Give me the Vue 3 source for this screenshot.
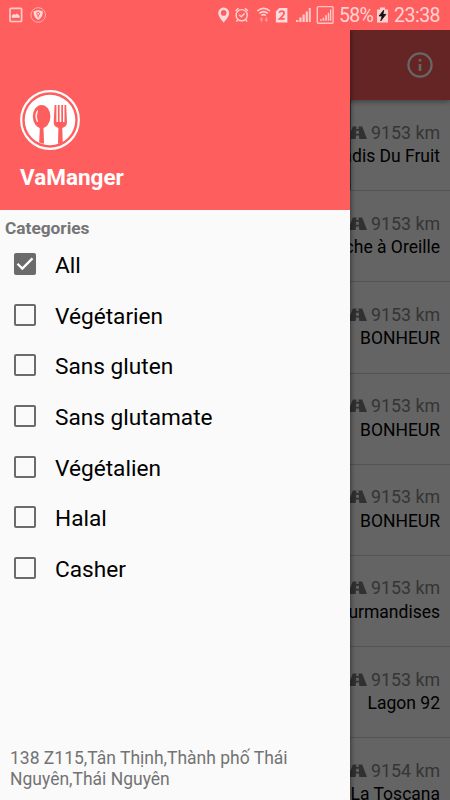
<script setup>
import { ref } from 'vue'

const restaurants = [
  { id: 1, name: 'Paradis Du Fruit', distance: '9153 km', photo: true },
  { id: 2, name: 'Bouche à Oreille', distance: '9153 km' },
  { id: 3, name: 'BONHEUR', distance: '9153 km' },
  { id: 4, name: 'BONHEUR', distance: '9153 km' },
  { id: 5, name: 'BONHEUR', distance: '9153 km' },
  { id: 6, name: 'Gourmandises', distance: '9153 km' },
  { id: 7, name: 'Lagon 92', distance: '9153 km' },
  { id: 8, name: 'La Toscana', distance: '9154 km' }
]

const categories = ref([
  { name: 'All', checked: true },
  { name: 'Végétarien', checked: false },
  { name: 'Sans gluten', checked: false },
  { name: 'Sans glutamate', checked: false },
  { name: 'Végétalien', checked: false },
  { name: 'Halal', checked: false },
  { name: 'Casher', checked: false }
])

const toggle = (category) => {
  category.checked = !category.checked
}
</script>

<template>
  <div class="screen">
    <header class="status-bar">
      <svg class="status-left" width="40" height="30" viewBox="0 0 40 30">
        <rect x="1" y="8.3" width="11.6" height="13.2" rx="1" fill="none" stroke="#ffc9c9" stroke-width="1.7" />
        <path d="M2.8 17.8v-2l2-1.8 1.600.8 1.500-1.400 2.700 2.400v2z" fill="#ffdada" />
        <circle cx="29.200" cy="15" r="7.300" fill="none" stroke="#ffabab" stroke-width="1" />
        <path d="M29.200 10l4.600 1.300c.2 4-1.300 7-4.600 8.800-3.300-1.800-4.800-4.800-4.600-8.800z" fill="#ffd5d5" />
        <circle cx="29.200" cy="13.700" r="1.400" fill="none" stroke="#ff5e5e" />
        <path d="M29.200 15v2.500" stroke="#ff5e5e" />
      </svg>
      <svg class="status-icons" width="120" height="30" viewBox="215 0 120 30">
        <path fill-rule="evenodd" d="M223.700 7.600a5.500 5.300 0 0 0-5.500 5.300c0 3.700 5.500 9.500 5.500 9.500s5.500-5.800 5.500-9.500a5.500 5.300 0 0 0-5.500-5.300zm0 2.500a2.800 2.800 0 1 1 0 5.600 2.800 2.800 0 0 1 0-5.600z" fill="#ffdada" />
        <g fill="none" stroke="#ffd0d0" stroke-width="1.400">
          <circle cx="241.700" cy="15.200" r="5.600" />
          <path d="M235.500 11l3-2.800M248 11l-3-2.800M238 19.500l-1.600 2M245.500 19.500l1.600 2M239.200 14.800l2 2 3.400-3.300" />
          <path d="M257.300 11q6.300-5.300 12.600 0M259.400 13.300q4.200-3.500 8.400 0M261.400 15.500q2.200-1.800 4.400 0" stroke-width="1.600" />
        </g>
        <path d="M259.500 19.500l2-2.500 2 2.500h-1.200v2.200h-1.600v-2.200zM264.400 19.400h1.200v-2.200h1.600v2.200h1.200l-2 2.500z" fill="#ff9999" />
        <path d="M279.200 8h8.200v14.500h-11.500v-11z" fill="#ffdada" />
        <path d="M279.200 12.800q.6-1.600 2.600-1.600 2.300 0 2.300 2 0 1.300-1.700 3l-2.800 2.700h5" fill="none" stroke="#ff5e5e" stroke-width="1.700" />
        <path d="M296 22v-2h2.400v2zM299.300 22v-4.500h2.300v4.500zM302.500 22v-7.500h2.300v7.500zM305.700 22v-10.500h2.200v10.500zM308.800 22v-14h2v14z" fill="#ffcaca" />
        <rect x="317.300" y="6.600" width="15.800" height="16.700" rx="1" fill="none" stroke="#ffc3c3" stroke-width="1.400" />
        <path d="M320 20.800v-1.500h1.700v1.500zM322.600 20.800v-3h1.700v3zM325.200 20.800v-5.500h1.700v5.500zM327.800 20.800v-8h1.500v8zM330 20.800V9.500h1.300v11.300z" fill="#ffcaca" />
      </svg>
      <span class="battery">58%</span>
      <svg class="battery-icon" width="11" height="30" viewBox="0 0 11 30">
        <path d="M0 9.500h3V7.600h5v1.900h3v13H0z" fill="#ffcfcf" />
        <path d="M6.800 10L2 16h3l-1.300 5L9 14.300H6z" fill="#170b0b" stroke="#170b0b" stroke-width=".7" />
      </svg>
      <span class="clock">23:38</span>
    </header>

    <main class="page">
      <div class="toolbar">
        <svg width="26" height="26" viewBox="0 0 26 26" fill="none" stroke="#fff" stroke-width="2.200">
          <circle cx="13" cy="13" r="11.600" />
          <path d="M13 12v7M13 7v2.500" stroke-width="2.600" />
        </svg>
      </div>
      <ul class="restaurants">
        <li v-for="restaurant in restaurants" :key="restaurant.id" class="restaurant">
          <div class="photo" :class="{ tinted: restaurant.photo }"></div>
          <div class="info">
            <div class="distance">
              <svg width="19" height="15" viewBox="0 0 19 15">
                <path fill-rule="evenodd" d="M4.800 1.500h3.700L8.300 4h2.400l-.2-2.500h3.700L19 14h-7.700l-.3-3.500H8L7.700 14H0zM8.200 5.700L8 8.800h3l-.2-3.100z" fill="#7b7b7b" />
              </svg>
              <span>{{ restaurant.distance }}</span>
            </div>
            <div class="name">{{ restaurant.name }}</div>
          </div>
        </li>
      </ul>
    </main>

    <div class="scrim"></div>

    <aside class="drawer">
      <div class="drawer-header">
        <svg class="logo" width="60" height="60" viewBox="0 0 60 60">
          <circle cx="30" cy="30" r="28.800" fill="none" stroke="#fff" stroke-width="2.200" />
          <circle cx="30" cy="30" r="25.300" fill="#fff" />
          <g fill="#ff5e5e">
            <ellipse cx="21.600" cy="26.500" rx="8.800" ry="11.500" />
            <path d="M19.900 36h3.500l.7 17.800q-2.600-.5-4.900-1.500z" />
            <path d="M34.600 15h1.800v17h1.500V15h1.700v17h1.700V15h1.700v17h1.500V15h1.700l.8 17.500q0 4-4.700 5.500l.4 14.200q-2.200 1.100-4.700 1.700l.4-15.900q-4.700-1.500-4.700-5.500z" />
          </g>
          <path d="M17.500 20.500q-3.500 5 0 11.500-2-6 0-11.500z" fill="#fff" stroke="#fff" stroke-width=".7" />
        </svg>
        <h1>VaManger</h1>
      </div>

      <h2>Categories</h2>
      <div class="categories">
        <div v-for="category in categories" :key="category.name" class="category" @click="toggle(category)">
          <span class="checkbox" :class="{ checked: category.checked }">
            <svg v-if="category.checked" width="18" height="18" viewBox="0 0 18 18">
              <path d="M1.500 8.800l4.800 4.800 10.200-10.200" fill="none" stroke="#fff" stroke-width="2.300" />
            </svg>
          </span>
          <span class="label">{{ category.name }}</span>
        </div>
      </div>

      <p class="address">138 Z115,Tân Thịnh,Thành phố Thái Nguyên,Thái Nguyên</p>
    </aside>
  </div>
</template>

<style>
body {
  margin: 0;
}
</style>

<style scoped>
.screen {
  position: relative;
  display: flex;
  flex-direction: column;
  width: 450px;
  height: 800px;
  overflow: hidden;
  background: #fafafa;
  font-family: Roboto, sans-serif;
}

.status-bar {
  position: relative;
  z-index: 2;
  display: flex;
  align-items: center;
  flex: none;
  height: 30px;
  background: #ff5e5e;
  color: #ffd3d3;
  font-size: 19.5px;
}

.status-left {
  margin-left: 8.5px;
}

.status-icons {
  margin-left: 166.5px;
}

.battery {
  width: 37px;
  margin-left: 4px;
  letter-spacing: -0.7px;
}

.battery-icon {
  margin-left: 1px;
}

.clock {
  margin-left: 6px;
  letter-spacing: -0.5px;
}

.page {
  flex: 1;
  min-height: 0;
}

.toolbar {
  position: relative;
  display: flex;
  align-items: center;
  justify-content: flex-end;
  height: 70px;
  padding-right: 17px;
  box-sizing: border-box;
  background: #ff5e5e;
  box-shadow: 0 2px 5px rgba(0, 0, 0, 0.35);
}

.restaurants {
  margin: 0;
  padding: 0;
  list-style: none;
}

.restaurant {
  display: flex;
  height: 91.2px;
  box-sizing: border-box;
  border-bottom: 1px solid #cfcfcf;
}

.photo {
  flex: none;
  width: 351px;
  margin-right: -351px;
}

.tinted {
  background: linear-gradient(90deg, #fafafa 350px, #3f9f9f 350px);
}

.info {
  flex: 1;
  padding: 20px 10px 0 0;
  text-align: right;
}

.distance {
  display: flex;
  align-items: center;
  justify-content: flex-end;
  gap: 4px;
  height: 24px;
  color: #858585;
  font-size: 17.8px;
}

.name {
  color: #000;
  font-size: 17.5px;
  line-height: 25px;
}

.scrim {
  position: absolute;
  inset: 30px 0 0;
  background: rgba(0, 0, 0, 0.6);
}

/* Menu over the list */
.drawer {
  position: absolute;
  top: 30px;
  bottom: 0;
  left: 0;
  display: flex;
  flex-direction: column;
  width: 350px;
  background: #fafafa;
  box-shadow: 0 0 6px rgba(0, 0, 0, 0.6);
}

.drawer-header {
  height: 180px;
  padding: 60px 20px 0;
  box-sizing: border-box;
  background: #ff5e5e;
  color: #fff;
}

.logo {
  display: block;
}

h1 {
  margin: 13px 0 0;
  font-size: 22.5px;
  font-weight: 700;
  line-height: 28px;
}

h2 {
  margin: 8px 0 0 5px;
  color: #757575;
  font-size: 17.3px;
  font-weight: 700;
  line-height: 21px;
}

.category {
  display: flex;
  align-items: center;
  gap: 19px;
  height: 50.6px;
  padding-left: 14px;
  color: #000;
  font-size: 22.65px;
}

.label {
  padding-top: 3px;
}

.checkbox {
  display: flex;
  align-items: center;
  justify-content: center;
  width: 22px;
  height: 22px;
  box-sizing: border-box;
  border: 2px solid #6b6b6b;
  border-radius: 2px;
}

.checked {
  background: #6b6b6b;
}

.address {
  margin: auto 30px 10px 10px;
  color: #737373;
  font-size: 17.5px;
  line-height: 21px;
}
</style>
